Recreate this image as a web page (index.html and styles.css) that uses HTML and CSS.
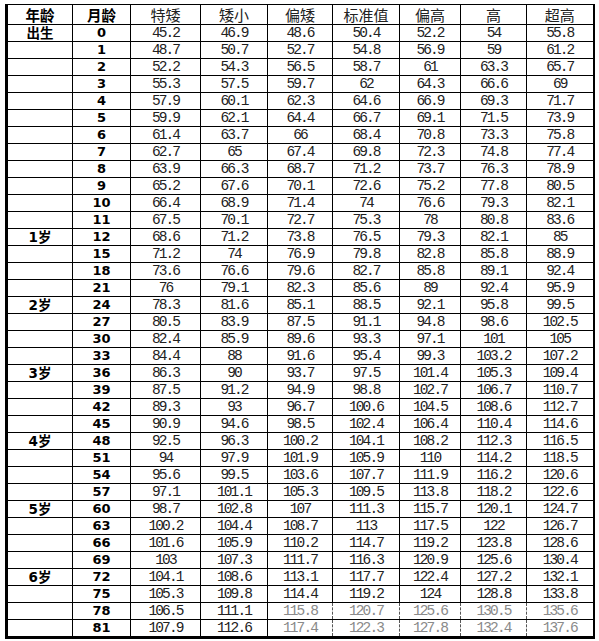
FILE: index.html
```html
<!DOCTYPE html>
<html lang="zh">
<head>
<meta charset="utf-8">
<title>身高表</title>
<link rel="stylesheet" href="styles.css">
</head>
<body>
<table class="chart">
<colgroup>
<col class="c1"><col class="c2"><col class="c3"><col class="c4"><col class="c5"><col class="c6"><col class="c7"><col class="c8"><col class="c9">
</colgroup>
<thead>
<tr class="head"><th class="bold">年龄</th><th class="bold">月龄</th><th>特矮</th><th>矮小</th><th>偏矮</th><th>标准值</th><th>偏高</th><th>高</th><th>超高</th></tr>
</thead>
<tbody>
<tr><td class="age">出生</td><td class="m">0</td><td>45.2</td><td>46.9</td><td>48.6</td><td>50.4</td><td>52.2</td><td>54</td><td>55.8</td></tr>
<tr><td class="age"></td><td class="m">1</td><td>48.7</td><td>50.7</td><td>52.7</td><td>54.8</td><td>56.9</td><td>59</td><td>61.2</td></tr>
<tr><td class="age"></td><td class="m">2</td><td>52.2</td><td>54.3</td><td>56.5</td><td>58.7</td><td>61</td><td>63.3</td><td>65.7</td></tr>
<tr><td class="age"></td><td class="m">3</td><td>55.3</td><td>57.5</td><td>59.7</td><td>62</td><td>64.3</td><td>66.6</td><td>69</td></tr>
<tr><td class="age"></td><td class="m">4</td><td>57.9</td><td>60.1</td><td>62.3</td><td>64.6</td><td>66.9</td><td>69.3</td><td>71.7</td></tr>
<tr><td class="age"></td><td class="m">5</td><td>59.9</td><td>62.1</td><td>64.4</td><td>66.7</td><td>69.1</td><td>71.5</td><td>73.9</td></tr>
<tr><td class="age"></td><td class="m">6</td><td>61.4</td><td>63.7</td><td>66</td><td>68.4</td><td>70.8</td><td>73.3</td><td>75.8</td></tr>
<tr><td class="age"></td><td class="m">7</td><td>62.7</td><td>65</td><td>67.4</td><td>69.8</td><td>72.3</td><td>74.8</td><td>77.4</td></tr>
<tr><td class="age"></td><td class="m">8</td><td>63.9</td><td>66.3</td><td>68.7</td><td>71.2</td><td>73.7</td><td>76.3</td><td>78.9</td></tr>
<tr><td class="age"></td><td class="m">9</td><td>65.2</td><td>67.6</td><td>70.1</td><td>72.6</td><td>75.2</td><td>77.8</td><td>80.5</td></tr>
<tr><td class="age"></td><td class="m">10</td><td>66.4</td><td>68.9</td><td>71.4</td><td>74</td><td>76.6</td><td>79.3</td><td>82.1</td></tr>
<tr><td class="age"></td><td class="m">11</td><td>67.5</td><td>70.1</td><td>72.7</td><td>75.3</td><td>78</td><td>80.8</td><td>83.6</td></tr>
<tr><td class="age">1岁</td><td class="m">12</td><td>68.6</td><td>71.2</td><td>73.8</td><td>76.5</td><td>79.3</td><td>82.1</td><td>85</td></tr>
<tr><td class="age"></td><td class="m">15</td><td>71.2</td><td>74</td><td>76.9</td><td>79.8</td><td>82.8</td><td>85.8</td><td>88.9</td></tr>
<tr><td class="age"></td><td class="m">18</td><td>73.6</td><td>76.6</td><td>79.6</td><td>82.7</td><td>85.8</td><td>89.1</td><td>92.4</td></tr>
<tr><td class="age"></td><td class="m">21</td><td>76</td><td>79.1</td><td>82.3</td><td>85.6</td><td>89</td><td>92.4</td><td>95.9</td></tr>
<tr><td class="age">2岁</td><td class="m">24</td><td>78.3</td><td>81.6</td><td>85.1</td><td>88.5</td><td>92.1</td><td>95.8</td><td>99.5</td></tr>
<tr><td class="age"></td><td class="m">27</td><td>80.5</td><td>83.9</td><td>87.5</td><td>91.1</td><td>94.8</td><td>98.6</td><td>102.5</td></tr>
<tr><td class="age"></td><td class="m">30</td><td>82.4</td><td>85.9</td><td>89.6</td><td>93.3</td><td>97.1</td><td>101</td><td>105</td></tr>
<tr><td class="age"></td><td class="m">33</td><td>84.4</td><td>88</td><td>91.6</td><td>95.4</td><td>99.3</td><td>103.2</td><td>107.2</td></tr>
<tr><td class="age">3岁</td><td class="m">36</td><td>86.3</td><td>90</td><td>93.7</td><td>97.5</td><td>101.4</td><td>105.3</td><td>109.4</td></tr>
<tr><td class="age"></td><td class="m">39</td><td>87.5</td><td>91.2</td><td>94.9</td><td>98.8</td><td>102.7</td><td>106.7</td><td>110.7</td></tr>
<tr><td class="age"></td><td class="m">42</td><td>89.3</td><td>93</td><td>96.7</td><td>100.6</td><td>104.5</td><td>108.6</td><td>112.7</td></tr>
<tr><td class="age"></td><td class="m">45</td><td>90.9</td><td>94.6</td><td>98.5</td><td>102.4</td><td>106.4</td><td>110.4</td><td>114.6</td></tr>
<tr><td class="age">4岁</td><td class="m">48</td><td>92.5</td><td>96.3</td><td>100.2</td><td>104.1</td><td>108.2</td><td>112.3</td><td>116.5</td></tr>
<tr><td class="age"></td><td class="m">51</td><td>94</td><td>97.9</td><td>101.9</td><td>105.9</td><td>110</td><td>114.2</td><td>118.5</td></tr>
<tr><td class="age"></td><td class="m">54</td><td>95.6</td><td>99.5</td><td>103.6</td><td>107.7</td><td>111.9</td><td>116.2</td><td>120.6</td></tr>
<tr><td class="age"></td><td class="m">57</td><td>97.1</td><td>101.1</td><td>105.3</td><td>109.5</td><td>113.8</td><td>118.2</td><td>122.6</td></tr>
<tr><td class="age">5岁</td><td class="m">60</td><td>98.7</td><td>102.8</td><td>107</td><td>111.3</td><td>115.7</td><td>120.1</td><td>124.7</td></tr>
<tr><td class="age"></td><td class="m">63</td><td>100.2</td><td>104.4</td><td>108.7</td><td>113</td><td>117.5</td><td>122</td><td>126.7</td></tr>
<tr><td class="age"></td><td class="m">66</td><td>101.6</td><td>105.9</td><td>110.2</td><td>114.7</td><td>119.2</td><td>123.8</td><td>128.6</td></tr>
<tr><td class="age"></td><td class="m">69</td><td>103</td><td>107.3</td><td>111.7</td><td>116.3</td><td>120.9</td><td>125.6</td><td>130.4</td></tr>
<tr><td class="age">6岁</td><td class="m">72</td><td>104.1</td><td>108.6</td><td>113.1</td><td>117.7</td><td>122.4</td><td>127.2</td><td>132.1</td></tr>
<tr><td class="age"></td><td class="m">75</td><td>105.3</td><td>109.8</td><td>114.4</td><td>119.2</td><td>124</td><td>128.8</td><td>133.8</td></tr>
<tr><td class="age"></td><td class="m">78</td><td>106.5</td><td>111.1</td><td class="wm">115.8</td><td class="wm">120.7</td><td class="wm">125.6</td><td class="wm">130.5</td><td class="wm">135.6</td></tr>
<tr class="last"><td class="age"></td><td class="m">81</td><td>107.9</td><td>112.6</td><td class="wm">117.4</td><td class="wm">122.3</td><td class="wm">127.8</td><td class="wm">132.4</td><td class="wm">137.6</td></tr>
</tbody>
</table>
</body>
</html>
```
FILE: styles.css
```css
html, body {
  margin: 0;
  padding: 0;
  background: #fff;
}

body {
  padding: 4px 0 0 5px;
}

.chart {
  border-collapse: collapse;
  table-layout: fixed;
  width: 589px;
  border-top: 1px solid #000;
  border-right: 2px solid #000;
  border-left: 3px solid #000;
  border-bottom: 3px solid #000;
  color: #111;
}

.c1 { width: 66px; }
.c2 { width: 58px; }
.c3 { width: 70px; }
.c4 { width: 67px; }
.c5 { width: 65px; }
.c6 { width: 67px; }
.c7 { width: 61px; }
.c8 { width: 66px; }
.c9 { width: 67px; }

.chart th,
.chart td {
  border: 1px solid #000;
  padding: 0;
  text-align: center;
  vertical-align: middle;
  overflow: hidden;
  white-space: nowrap;
}

.chart .head th {
  height: 19px;
  font-family: "Noto Sans CJK SC", sans-serif;
  font-size: 15px;
  font-weight: 400;
  line-height: 19px;
  color: #222;
}

.chart .head th.bold {
  font-weight: 700;
  font-size: 14.5px;
  color: #000;
}

.chart tbody tr {
  height: 17px;
}

.chart td {
  height: 16px;
  font-family: "Liberation Mono", "DejaVu Sans Mono", monospace;
  font-size: 14.5px;
  letter-spacing: -1.9px;
  line-height: 16px;
  color: #222;
}

.chart td.m {
  font-family: "DejaVu Sans", sans-serif;
  font-weight: 700;
  font-size: 13px;
  letter-spacing: 0;
  color: #000;
}

.chart td.age {
  font-family: "DejaVu Sans", "Noto Sans CJK SC", sans-serif;
  font-weight: 700;
  font-size: 13.5px;
  letter-spacing: 0;
  color: #000;
}

.chart td.wm {
  color: #8a8a8a;
  border-left-style: dashed;
  border-right-style: dashed;
  border-left-color: #555;
  border-right-color: #555;
}

.chart tr.last td.wm {
  border-top-style: dashed;
  border-top-color: #555;
}
```
